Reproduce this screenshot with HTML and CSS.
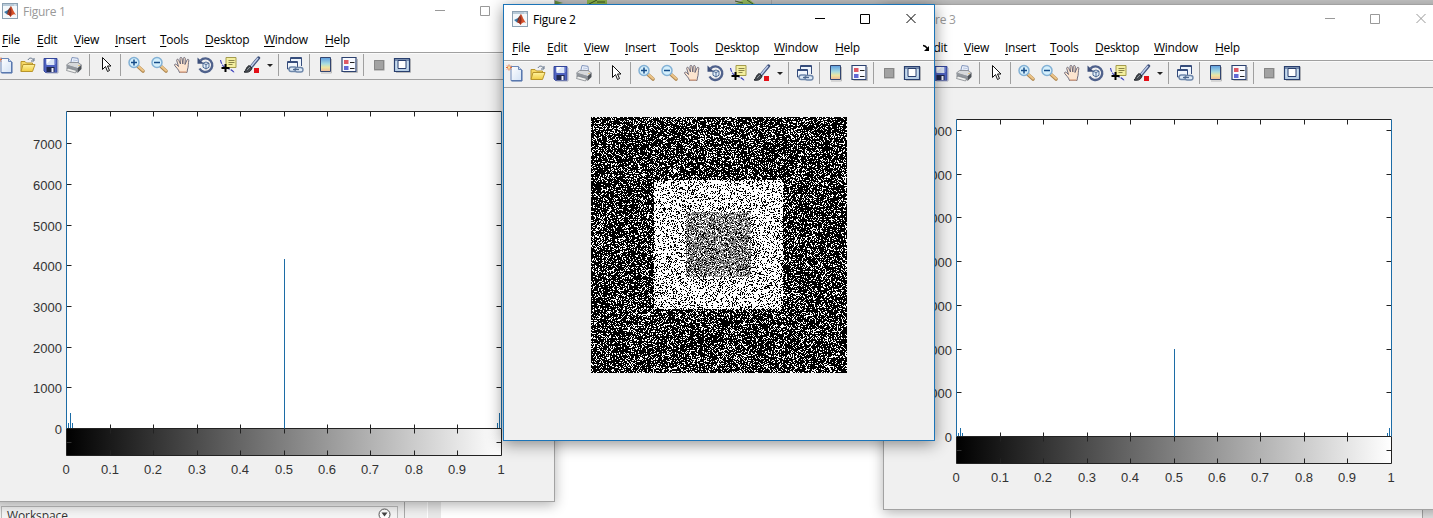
FILE: index.html
```html
<!DOCTYPE html>
<html lang="en">
<head>
<meta charset="utf-8">
<title>Figures</title>
<link rel="stylesheet" href="styles.css">
</head>
<body>
<svg class="defs" width="0" height="0">
  <defs>
    <linearGradient id="gray"><stop offset="0" stop-color="#000"/><stop offset="1" stop-color="#fff"/></linearGradient>
    <linearGradient id="map" x2="0" y2="1"><stop offset="0" stop-color="#5b9be0"/><stop offset=".45" stop-color="#a8dce0"/><stop offset=".7" stop-color="#eee6a0"/><stop offset="1" stop-color="#f0b898"/></linearGradient>
    <linearGradient id="page" x2="1" y2="1"><stop offset="0" stop-color="#fff"/><stop offset="1" stop-color="#d3e2f5"/></linearGradient>
    <linearGradient id="gold" x2="0" y2="1"><stop offset="0" stop-color="#fff3a0"/><stop offset="1" stop-color="#f0cc40"/></linearGradient>
  </defs>
  <symbol id="i-logo" viewBox="0 0 16 16">
    <rect x=".5" y=".5" width="15" height="15" fill="#f4f8fb" stroke="#8ba0b2"/><path d="M1 1h14v2H1z" fill="#b8cad8"/><path d="M12 1.500h2v1h-2z" fill="#e8f0f5"/>
    <path d="M2 9l4-2 1.500 1.500L5 11.500z" fill="#3b79a8"/><path d="M6 7l3-4-1.500 6.500L5 11.500z" fill="#713329"/><path d="M9 3c1.500 2 2.500 6 5 9-2-1.500-3.500-.5-5.500 2-.5-1.500-1.500-2.500-3.500-2.500C7.500 10 8 5 9 3z" fill="#d5512a"/><path d="M9 3l.5 7-1 4c-.5-1.500-1.500-2.500-3-2.500C8 10 8 6 9 3z" fill="#8d2c20"/>
  </symbol>
  <symbol id="i-new" viewBox="0 0 18 18">
    <path d="M5.500 2.500h7.500l3 3v11H5.500z" fill="url(#page)" stroke="#6c87b7"/><path d="M13 2.500v3h3" fill="#c5d7f0" stroke="#6c87b7"/><path d="M16.500 6v11H6" fill="none" stroke="#4769a5"/>
    <path d="M3.500.5v6M.5 3.500h6M1.500 1.500l4 4M5.500 1.500l-4 4" stroke="#e36a34"/><circle cx="3.500" cy="3.500" r="1.200" fill="#ffe7a0"/>
  </symbol>
  <symbol id="i-open" viewBox="0 0 18 18">
    <path d="M2.500 15.500V5.500h4l1.500 1.500h6v2" fill="#f6d865" stroke="#b8952c"/><path d="M2.500 15.500l2-7h12l-2.500 7z" fill="url(#gold)" stroke="#b8952c"/><path d="M9.500 4c1-2.500 4-2.500 5.500 0m.5-2v3h-3" fill="none" stroke="#5c6e87"/>
  </symbol>
  <symbol id="i-save" viewBox="0 0 18 18">
    <path d="M2.500 2.500h13v14H4l-1.500-1.500z" fill="#4f62c0" stroke="#34469a"/><path d="M5 3h8v6H5z" fill="#dce6f7"/><path d="M5 3h5L5 8z" fill="#fff"/><path d="M5 11h8v5H5z" fill="#20294f"/><path d="M10 12h2v4h-2z" fill="#f4f5ff"/><path d="M13.500 3v5" stroke="#8796dd"/><path d="M16.500 4v13H5" stroke="#a7abc0" fill="none"/>
  </symbol>
  <symbol id="i-print" viewBox="0 0 18 18">
    <path d="M6 8L7.500 1.500l6 .8L14 8z" fill="#eef4fe" stroke="#8295bb"/><path d="M8.500 4l4 .5M8 6l4 .5" stroke="#a9b8d5" stroke-width=".8"/><path d="M2 9l3-2.500h8.500L17 9l-4 3.500z" fill="#d7d9db" stroke="#7d8288" stroke-width=".8"/><path d="M2 9l11 3v4.500L2 13z" fill="#92979d"/><path d="M13 12.500L17 9v4l-4 4z" fill="#4c5157"/><path d="M3 12l9 2.500-1 2.500-9-2.500z" fill="#eff0ee" stroke="#767a80" stroke-width=".7"/><path d="M14 9.500h1" stroke="#e5b030"/>
  </symbol>
  <symbol id="i-arrow" viewBox="0 0 18 18">
    <path d="M5.500 1.500v12l3-3 2 5 2-1-2-4.500h3.500z" fill="#fff" stroke="#111"/>
  </symbol>
  <symbol id="i-zoomin" viewBox="0 0 18 18">
    <path d="M10.500 10.500l5 4.500" stroke="#b08850" stroke-width="3.600" stroke-linecap="round"/><path d="M10.500 10l5 4.500" stroke="#ecc488" stroke-width="2.200" stroke-linecap="round"/><circle cx="6.500" cy="6.500" r="5" fill="#d4effc" stroke="#83b1d5" stroke-width="1.500"/><path d="M6.500 3.500v6M3.500 6.500h6" stroke="#164c88" stroke-width="1.500"/>
  </symbol>
  <symbol id="i-zoomout" viewBox="0 0 18 18">
    <path d="M10.500 10.500l5 4.500" stroke="#b08850" stroke-width="3.600" stroke-linecap="round"/><path d="M10.500 10l5 4.500" stroke="#ecc488" stroke-width="2.200" stroke-linecap="round"/><circle cx="6.500" cy="6.500" r="5" fill="#d4effc" stroke="#83b1d5" stroke-width="1.500"/><path d="M3.500 6.500h6" stroke="#164c88" stroke-width="1.500"/>
  </symbol>
  <symbol id="i-hand" viewBox="0 0 18 18">
    <path d="M6 16.500C5 13 2.500 11.500 1.200 9.500c-.7-1.300 1-2 2-.8L5 10.500 3.200 4.500c-.2-1.500 1.500-1.700 2-.3L7 8 6.500 2.500c0-1.500 1.800-1.500 2 0L9.300 8l.5-5.500c.2-1.500 2-1.200 2 .2L11.500 8.500l2-4.500c.6-1.300 2-.7 1.800.6-.6 3-.4 4.500-.8 7-.3 1.900-1 3-1 4.900z" fill="#fde5cf" stroke="#615f70" stroke-width=".9"/><path d="M6.500 16h6.500" stroke="#dca98a" stroke-width="1.500"/>
  </symbol>
  <symbol id="i-rotate" viewBox="0 0 18 18">
    <path d="M4 4.500A6.800 6.800 0 1 1 3 12.500" fill="none" stroke="#50628c" stroke-width="2.400"/><path d="M1 1.500v6.300h6.500z" fill="#3c4f7a"/><path d="M6.500 7.200l3-1.200 3 1.200v4L9.500 13l-3-1.800zM6.500 7.200l3 1.300 3-1.300M9.500 8.500V13" fill="#e2effb" stroke="#42608c" stroke-width=".9"/>
  </symbol>
  <symbol id="i-cursor" viewBox="0 0 18 18">
    <path d="M6.500 1.500h10v10h-10z" fill="#f4efa0" stroke="#a49c4c"/><path d="M9 4.500h6M9 6.500h6M9 8.500h4" stroke="#8a8448"/><path d="M1 4c1 5 3 7 6 8s6 2 8 5" fill="none" stroke="#4044bd" stroke-width="1.200" stroke-dasharray="4 1"/><path d="M6 8v8M2 12h8" stroke="#000" stroke-width="2"/>
  </symbol>
  <symbol id="i-brush" viewBox="0 0 18 18">
    <path d="M8 11L15.500 2" stroke="#42547d" stroke-width="3.400" stroke-linecap="round"/><path d="M8 10.500L15 2" stroke="#bfcdea" stroke-width="1.500"/><path d="M1 16c2-1 2-5 5-6.500l3 2.500c-1 4-5 5-8 4z" fill="#454a50" stroke="#22262b"/><path d="M4 14l3-3" stroke="#8b9198"/><path d="M11 12h5v5h-5z" fill="#e30f17"/>
  </symbol>
  <symbol id="i-link" viewBox="0 0 18 18">
    <path d="M4.500 5V1.500h11V10" fill="#eef5fd" stroke="#364d7c"/><path d="M4.500 2.500h11" stroke="#364d7c"/><path d="M1.500 5.500h10V13h-10z" fill="#f1f6fc" stroke="#364d7c"/><path d="M1.500 6.500h10" stroke="#364d7c"/><rect x="3" y="11" width="8" height="4.500" rx="2.200" fill="#dce8f5" stroke="#6d87aa" stroke-width="1.400"/><rect x="9" y="11.500" width="8" height="4.500" rx="2.200" fill="#dce8f5" stroke="#6d87aa" stroke-width="1.400"/><path d="M7 13.500h6" stroke="#4d698f" stroke-width="1.300"/>
  </symbol>
  <symbol id="i-colorbar" viewBox="0 0 18 18"><path d="M15.500 3v14H5" fill="none" stroke="#bbb"/><path d="M4.500 1.500h10v14h-10z" fill="url(#map)" stroke="#33456f"/></symbol>
  <symbol id="i-legend" viewBox="0 0 18 18"><path d="M17 3v13.500H3" fill="none" stroke="#bbb"/><path d="M1.500 1.500h14v14h-14z" fill="#f8faff" stroke="#2c416f" stroke-width="1.200"/><path d="M3.500 4H8v4H3.500z" fill="#df5965"/><path d="M3.500 10H8v4H3.500z" fill="#6269d5"/><path d="M9.500 6.500H14M9.500 12.500H14" stroke="#222"/></symbol>
  <symbol id="i-square" viewBox="0 0 18 18"><path d="M4 4h10.500v10.500H4z" fill="#999"/><path d="M4.500 4.500h9v9h-9z" fill="#a2a2a2" stroke="#868686"/></symbol>
  <symbol id="i-dock" viewBox="0 0 18 18"><path d="M17.500 3v13.500H3" fill="none" stroke="#bbb"/><path d="M1.500 2.500h15v13h-15z" fill="#c7dcef" stroke="#293f6e" stroke-width="1.200"/><path d="M2 4h14" stroke="#293f6e"/><path d="M5 4.500h8v8H5z" fill="#fff" stroke="#293f6e"/><path d="M2.500 14h13" stroke="#8ca6c5" stroke-dasharray="1 1"/></symbol>
</svg>

<template id="chrome">
  <div class="titlebar">
    <svg class="logo"><use href="#i-logo"/></svg><span class="title"></span>
    <svg class="controls" width="108" height="20" viewBox="0 0 108 20"><path d="M4 9.500h10M49.500 5.500h9v9h-9zM95.500 5l9 9M104.500 5l-9 9"/></svg>
  </div>
  <div class="menubar">
    <span><u>F</u>ile</span><span><u>E</u>dit</span><span><u>V</u>iew</span><span><u>I</u>nsert</span><span><u>T</u>ools</span><span><u>D</u>esktop</span><span><u>W</u>indow</span><span><u>H</u>elp</span>
    <svg class="undock" width="8" height="8" viewBox="0 0 8 8"><path d="M1 1.500c2 0 3 1 4.500 3" fill="none" stroke="#000" stroke-width="1.500"/><path d="M7 2v5H2z"/></svg>
  </div>
  <div class="toolbar">
    <svg><use href="#i-new"/></svg><svg><use href="#i-open"/></svg><svg><use href="#i-save"/></svg><svg><use href="#i-print"/></svg><i></i>
    <svg class="wide"><use href="#i-arrow"/></svg><i></i>
    <svg><use href="#i-zoomin"/></svg><svg><use href="#i-zoomout"/></svg><svg><use href="#i-hand"/></svg><svg><use href="#i-rotate"/></svg><svg><use href="#i-cursor"/></svg><svg class="brush"><use href="#i-brush"/></svg><b></b><i></i>
    <svg class="wide"><use href="#i-link"/></svg><i></i>
    <svg class="wide"><use href="#i-colorbar"/></svg><svg><use href="#i-legend"/></svg><i></i>
    <svg class="wide"><use href="#i-square"/></svg><svg class="last"><use href="#i-dock"/></svg>
  </div>
</template>

<main class="desktop">
  <div class="strip"><svg width="260" height="5" viewBox="0 0 260 5"><path d="M0 0l10 3-10 2z" fill="#6d9b42"/><path d="M34 0h20v5H34z" fill="#8fb64c"/><path d="M44 0l-8 4M44 2h8" stroke="#37551c"/><path d="M182 4l8-4 7 0 5 4z" fill="#98bf60"/><path d="M182 1l8 2M194 0l6 4" stroke="#455f2b"/><path d="M218.500 0v5" stroke="#aaa"/></svg></div>
  <div class="dock-area">
    <div class="workspace"><span>Workspace</span><svg width="13" height="13" viewBox="0 0 13 13"><circle cx="6.500" cy="6.500" r="5.500" fill="#fff" stroke="#555"/><path d="M3.500 4.500h6l-3 4z" fill="#444"/></svg></div>
    <div class="gutter"></div><div class="gutter inner"></div><div class="editor"></div><div class="right-pane"></div><div class="edge"></div>
  </div>
  <section class="window fig1" data-title="Figure 1"><div class="client"><svg class="plot" data-step="40.700" data-peak="259" data-side="413"></svg></div></section>
  <section class="window fig3" data-title="Figure 3"><div class="client"><svg class="plot" data-step="43.750" data-peak="341" data-side="420"></svg></div></section>
  <section class="window fig2 active" data-title="Figure 2"><div class="client image"><canvas width="256" height="256"></canvas></div></section>
</main>
<script src="figures.js"></script>
</body>
</html>
```

FILE: styles.css
```css
* { box-sizing: border-box; }
body { margin: 0; overflow: hidden; font-family: "Open Sans", "Noto Sans", sans-serif; font-size: 12px; }
.defs { position: absolute; }
.desktop { position: relative; width: 1433px; height: 518px; overflow: hidden; background: #fff; display: flex; flex-direction: column; justify-content: space-between; }
.strip { height: 12px; background: #c2c2c2; padding-left: 553px; }
.strip svg { display: block; }
.dock-area { height: 17px; display: flex; background: #f0f0f0; }
.workspace { width: 397px; margin: 5px 6px 0 1px; border: 1px solid #bbb; border-bottom: 0; background: #f5f5f5; display: flex; justify-content: space-between; height: 12px; padding: 1px 6px 0 5px; color: #333; line-height: 15px; letter-spacing: -.1px; }
.workspace svg { flex: none; }
.gutter { width: 23px; border-left: 1px solid #aaa; }
.gutter.inner { width: 14px; border-left-color: #fff; background: #e9e9e9; }
.editor { width: 629px; background: #fff; }
.right-pane { width: 352px; border-left: 1px solid #aaa; background: #fff; }
.edge { flex: 1; border-left: 1px solid #aaa; background: #e8e8e8; }

/* Free-floating desktop windows */
.window { position: absolute; width: 562px; height: 506px; border: 1px solid #a2a2a2; background: #fff; box-shadow: 0 3px 12px rgba(0,0,0,.3); display: flex; flex-direction: column; }
.fig1 { left: -7px; top: -4px; }
.fig3 { left: 883px; top: 4px; }
.fig2 { left: 503px; top: 4px; width: 432px; height: 437px; }
.window.active { border-color: #1b74b8; box-shadow: 0 3px 15px rgba(0,0,0,.45); }

.titlebar { height: 30px; flex: none; display: flex; align-items: center; padding: 0 15px 2px 8px; color: #999; letter-spacing: -.25px; }
.active .titlebar { color: #000; }
.logo { width: 16px; height: 16px; margin-right: 5px; }
.controls { margin-left: auto; fill: none; stroke: #999; }
.active .controls { stroke: #000; }
.menubar { height: 25px; flex: none; display: grid; grid-template-columns: 35px 37px 41px 45px 45px 59px 61px 40px 1fr; align-items: center; padding: 0 4px 0 8px; color: #000; letter-spacing: -.28px; }
.menubar span { white-space: nowrap; }
.menubar u { text-underline-offset: 2px; text-decoration-skip-ink: none; }
.undock { justify-self: end; }
.toolbar { height: 28px; flex: none; display: flex; align-items: center; padding-bottom: 2px; border-top: 1px solid #a0a0a0; border-bottom: 1px solid #a0a0a0; background: #f0f0f0; box-shadow: inset 0 1px #fafafa; }
.toolbar svg { width: 23px; height: 18px; flex: none; }
.toolbar svg:first-child { margin-left: -1px; }
.toolbar svg.wide { width: 26px; }
.toolbar svg.brush { width: 24px; }
.toolbar svg.last { width: 20px; }
.toolbar i { width: 5px; height: 22px; flex: none; border-left: 1px solid #a0a0a0; margin: 0 -1px 0 1px; }
.toolbar i:nth-of-type(1) { margin-left: 4px; }
.toolbar i:nth-of-type(2) { margin-right: 0; }
.toolbar i:nth-of-type(4) { margin-right: -2px; }
.toolbar i:nth-of-type(5) { margin: 0 -2px 0 2px; }
.toolbar b { border: 3px solid transparent; border-top: 3px solid #222; border-bottom: 0; margin: 0 4px 0 3px; }
.client { flex: 1; min-height: 0; background: #f0f0f0; }
.client.image { padding: 29px 0 0 87px; }
canvas { display: block; width: 256px; height: 256px; }
.plot { display: block; width: 560px; height: 421px; }
.plot text { font: 13px "Liberation Sans", Arial, sans-serif; fill: #333; }
.axis { stroke: #222; fill: none; }
.stem { stroke: #1c6ca6; fill: none; }
```

FILE: figures.js
```js
const chrome = document.getElementById('chrome');
document.querySelectorAll('.window').forEach(win => {
  const head = chrome.content.cloneNode(true);
  head.querySelector('.title').textContent = win.dataset.title;
  win.prepend(head);
});

// Histogram with a grayscale bar below the horizontal axis
document.querySelectorAll('.plot').forEach(plot => {
  const step = +plot.dataset.step, peak = plot.dataset.peak, side = +plot.dataset.side;
  const left = 66.5, right = 501.5, top = 111.5, base = 428.5, bottom = 455.5;
  const columns = [66, 110, 153, 197, 240, 284, 327, 370, 414, 457, 501];
  let ticks = '', labels = '';
  columns.forEach((column, i) => {
    const x = column + 0.5;
    if (i > 0 && i < 10) ticks += `M${x} ${top}v5M${x} ${base - 4}v9M${x} ${bottom}v-5`;
    labels += `<text x="${column}" y="474" text-anchor="middle">${i === 10 ? 1 : i ? '0.' + i : 0}</text>`;
  });
  for (let i = 0; i <= 7; i++) {
    const y = Math.round(base - i * step - 0.5) + 0.5;
    if (i) ticks += `M${left} ${y}h5M${right} ${y}h-5`;
    labels += `<text x="62" y="${y + 5.5}" text-anchor="end">${i * 1000}</text>`;
  }
  const low = Math.min(side + 10, 425);
  plot.setAttribute('viewBox', '-6 80 560 421');
  plot.innerHTML = `<path d="M${left} ${top}H${right}V${base}H${left}z" fill="#fff"/>
    <path d="M${left} ${base}H${right}V${bottom}H${left}z" fill="url(#gray)" class="bar"/>
    <path class="axis" d="M${left} ${top}H${right}M${left} ${base}H${right}V${bottom}H${left}zM${right} 442.5h-5${ticks}"/>
    <path d="M${left} 442.5h5" stroke="#333"/>
    <path class="stem" d="M${left} ${top}V${base}M${right} ${top}V${base}M284.5 ${peak}V${base}M68.5 ${low}V428M70.500 ${side}V428M72.500 ${low}V428M497.500 ${low}V428M499.500 ${side}V428"/>${labels}`;
});

// Nested squares with salt-and-pepper noise
const ctx = document.querySelector('canvas').getContext('2d');
const img = ctx.createImageData(256, 256);
let seed = 20117;
const random = () => {
  seed = (seed + 0x6D2B79F5) | 0;
  let t = Math.imul(seed ^ (seed >>> 15), 1 | seed);
  t = (t + Math.imul(t ^ (t >>> 7), 61 | t)) ^ t;
  return ((t ^ (t >>> 14)) >>> 0) / 4294967296;
};
const inside = (x, y, a, b) => x >= a && x < b && y >= a && y < b;
for (let y = 0; y < 256; y++) for (let x = 0; x < 256; x++) {
  let v = inside(x, y, 95, 160) ? 128 : inside(x, y, 63, 192) ? 255 : 0;
  const r = random();
  if (r < 0.25) v = 0; else if (r > 0.75) v = 255;
  const p = (y * 256 + x) * 4;
  img.data[p] = img.data[p + 1] = img.data[p + 2] = v;
  img.data[p + 3] = 255;
}
ctx.putImageData(img, 0, 0);
```
